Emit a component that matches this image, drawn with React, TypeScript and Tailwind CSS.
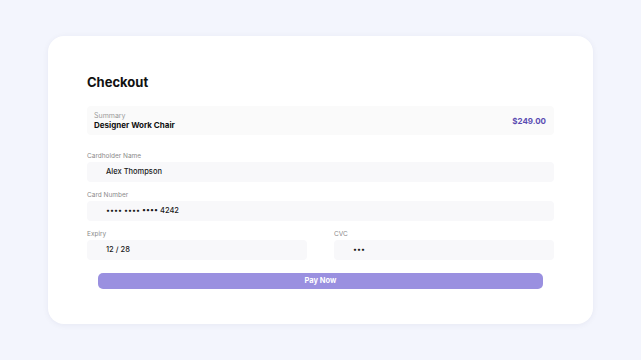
export default function App() {
  return (
    <div className="w-[641px] h-[360px] bg-[#f3f5fd] pt-[36px] pl-[48px] font-['Inter',sans-serif]">
      <div className="w-[545px] h-[288px] bg-white rounded-[16px] shadow-[0_1px_6px_rgba(30,40,90,0.06)] pt-[72px] px-[39px] relative">
        <h1 className="absolute left-[39px] top-[36px] text-[13px] leading-[20px] font-bold text-[#111]">Checkout</h1>
        <div className="h-[29px] -mt-[2px] bg-[#fafafa] rounded-[4px] flex items-center justify-between pl-[7px] pr-[8px]">
          <div className="flex flex-col">
            <span className="text-[7px] leading-[9px] text-[#9a9a9a]">Summary</span>
            <span className="text-[8px] leading-[11px] font-bold text-[#111]">Designer Work Chair</span>
          </div>
          <span className="text-[8px] font-bold text-[#5a4cb2]">$249.00</span>
        </div>

        <div className="mt-[16px] flex flex-col">
          <label className="text-[6.5px] leading-[10px] text-[#8a8a8a] mb-[1px]">Cardholder Name</label>
          <div className="h-[20px] bg-[#f8f8fa] rounded-[4px] flex items-center pl-[19px] text-[7.5px] font-medium text-[#1a1a1a]">Alex Thompson</div>
        </div>

        <div className="mt-[8px] flex flex-col">
          <label className="text-[6.5px] leading-[10px] text-[#8a8a8a] mb-[1px]">Card Number</label>
          <div className="h-[20px] bg-[#f8f8fa] rounded-[4px] flex items-center pl-[19px] text-[7.5px] font-medium text-[#1a1a1a]">•••• •••• •••• 4242</div>
        </div>

        <div className="mt-[8px] flex gap-[27px]">
          <div className="flex-1 flex flex-col">
            <label className="text-[6.5px] leading-[10px] text-[#8a8a8a] mb-[1px]">Expiry</label>
            <div className="h-[20px] bg-[#f8f8fa] rounded-[4px] flex items-center pl-[19px] text-[7.5px] font-medium text-[#1a1a1a]">12 / 28</div>
          </div>
          <div className="flex-1 flex flex-col">
            <label className="text-[6.5px] leading-[10px] text-[#8a8a8a] mb-[1px]">CVC</label>
            <div className="h-[20px] bg-[#f8f8fa] rounded-[4px] flex items-center pl-[19px] text-[7.5px] font-medium text-[#1a1a1a]">•••</div>
          </div>
        </div>

        <button className="mt-[13px] mx-[11px] w-[445px] h-[16px] rounded-[5px] bg-[#9a90e0] text-white text-[7.5px] font-bold flex items-center justify-center">
          Pay Now
        </button>
      </div>
    </div>
  );
}
